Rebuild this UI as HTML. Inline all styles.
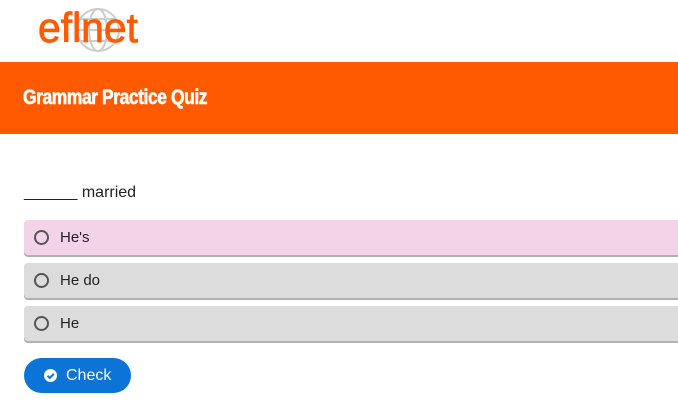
<!DOCTYPE html>
<html><head><style>
body{margin:0;width:678px;height:407px;overflow:hidden;background:#fff;font-family:"Liberation Sans",sans-serif;position:relative}
.logo{position:absolute;left:38px;top:2px}
.bar{position:absolute;left:0;top:62px;width:678px;height:72px;background:#ff5a00}
.bar span{position:absolute;left:23px;top:24px;color:#fff;font-weight:bold;font-size:21px;letter-spacing:-0.5px;transform:scaleX(0.83);transform-origin:left;font-family:"Liberation Sans Narrow","Liberation Sans",sans-serif;-webkit-text-stroke:0.6px #fff;white-space:nowrap}
.q{position:absolute;left:24px;top:184px;font-size:16px;color:#222}
.opt{position:absolute;left:24px;width:660px;height:35px;border-radius:4px;box-shadow:0 2px 0 #b0b0b0;font-size:15px;color:#222}
.opt i{position:absolute;left:10px;top:10px;width:11px;height:11px;border:2px solid #555;border-radius:50%}
.opt b{font-weight:normal;position:absolute;left:36px;top:9px}
.btn{position:absolute;left:24px;top:358px;width:107px;height:35px;border-radius:18px;background:#0b74d6;color:#fff;font-size:16px}
.btn span{position:absolute;left:42px;top:9px}
.btn i{position:absolute;left:20px;top:11px;width:13px;height:13px;border-radius:50%;background:#fff}
</style></head><body>
<div class="logo"><svg width="110" height="56">
<g stroke="#ccc" stroke-width="2" fill="none">
<circle cx="60" cy="28" r="21"/>
<ellipse cx="60" cy="28" rx="9" ry="21"/>
<line x1="39" y1="28" x2="81" y2="28"/>
<line x1="43" y1="17" x2="77" y2="17"/>
<line x1="43" y1="39" x2="77" y2="39"/>
</g>
<text x="0" y="40" font-family="Liberation Sans Narrow,Liberation Sans,sans-serif" font-size="42" fill="#ff5a00" stroke="#ff5a00" stroke-width="0.8" textLength="100" lengthAdjust="spacingAndGlyphs">eflnet</text>
</svg></div>
<div class="bar"><span>Grammar Practice Quiz</span></div>
<div class="q">______ married</div>
<div class="opt" style="top:220px;background:#f3d3e7"><i></i><b>He's</b></div>
<div class="opt" style="top:263px;background:#dcdcdc"><i></i><b>He do</b></div>
<div class="opt" style="top:306px;background:#dcdcdc"><i></i><b>He</b></div>
<div class="btn"><i><svg width="13" height="13"><path d="M3.5 6.8l2.3 2.2 4-4.2" stroke="#0b74d6" stroke-width="2" fill="none"/></svg></i><span>Check</span></div>
</body></html>
